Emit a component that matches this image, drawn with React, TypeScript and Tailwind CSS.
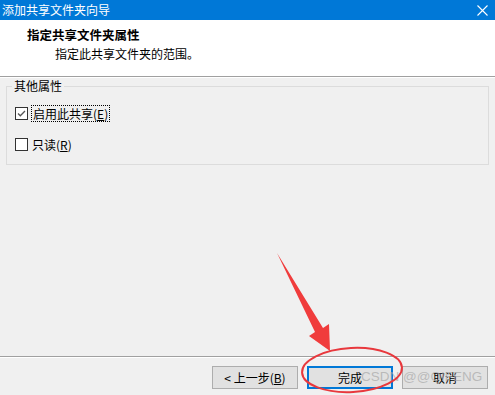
import React from "react";

const FONT = "font-['Noto_Sans_CJK_SC','Noto_Sans',sans-serif]";

function Checkbox({ checked }: { checked: boolean }) {
  return (
    <span className="w-[13px] h-[13px] border border-[#333333] bg-white flex items-center justify-center shrink-0">
      {checked && (
        <svg width="11" height="11" viewBox="0 0 11 11">
          <path d="M2 5.5 L4.3 7.8 L9 3" fill="none" stroke="#555555" strokeWidth="1.3" />
        </svg>
      )}
    </span>
  );
}

function Button({ children, primary }: { children: React.ReactNode; primary?: boolean }) {
  return (
    <button
      className={
        primary
          ? "w-[86px] h-[23px] bg-[#e1e1e1] border-2 border-[#0078d7] text-[12px] text-black leading-none"
          : "w-[86px] h-[23px] bg-[#e1e1e1] border border-[#adadad] text-[12px] text-black leading-none"
      }
    >
      {children}
    </button>
  );
}

export default function App() {
  return (
    <div className={`relative w-[495px] h-[395px] overflow-hidden flex flex-col bg-[#f0f0f0] ${FONT}`}>
      {/* title bar */}
      <div className="h-[20px] bg-[#0078d7] text-white text-[12px] flex items-center justify-between pl-[2px] pr-[7px]">
        <span className="leading-none">添加共享文件夹向导</span>
        <svg width="11" height="11" viewBox="0 0 11 11">
          <path d="M0.5 0.5 L10.5 10.5 M10.5 0.5 L0.5 10.5" stroke="#ffffff" strokeWidth="1.1" />
        </svg>
      </div>

      {/* header */}
      <div className="h-[57px] bg-white border-b border-[#a0a0a0] shadow-[0_1px_0_#ffffff] pt-[7px]">
        <div className="pl-[27px] text-[12.5px] font-bold text-black leading-[16px]">指定共享文件夹属性</div>
        <div className="pl-[55px] mt-[3px] text-[12px] text-black leading-[16px]">指定此共享文件夹的范围。</div>
      </div>

      {/* group box */}
      <fieldset className="mx-[6px] mt-[1px] border border-[#dcdcdc] pb-[11px]">
        <legend className="ml-[5px] px-[2px] text-[12px] leading-[16px] text-black">其他属性</legend>
        <div className="flex flex-col gap-[13px] pl-[8px] pt-[10px]">
          <label className="h-[18px] flex items-center gap-[3px]">
            <Checkbox checked />
            <span className="border border-dotted border-black px-[1px] text-[12px] leading-[15px] text-black">
              启用此共享(<span className="underline">E</span>)
            </span>
          </label>
          <label className="h-[18px] flex items-center gap-[4px]">
            <Checkbox checked={false} />
            <span className="text-[12px] leading-[15px] text-black">
              只读(<span className="underline">R</span>)
            </span>
          </label>
        </div>
      </fieldset>

      <div className="flex-1" />

      {/* footer */}
      <div className="h-[39px] border-t border-[#a0a0a0] shadow-[inset_0_1px_0_#ffffff] flex justify-end items-start gap-[9px] pt-[9px] pr-[7px]">
        <Button>
          &lt; 上一步(<span className="underline">B</span>)
        </Button>
        <Button primary>完成</Button>
        <Button>取消</Button>
      </div>

      {/* watermark */}
      <span className="absolute left-[361px] top-[370px] text-[13.5px] leading-none text-[#a8a8a8]/70 font-['Liberation_Sans',sans-serif] pointer-events-none">
        CSDN @@QIFENG
      </span>

      {/* annotation */}
      <svg className="absolute inset-0 pointer-events-none" width="495" height="395" viewBox="0 0 495 395">
        <polygon points="277,253 323,328 329,324 330,351 309,336 315,332" fill="#f03c3c" />
        <ellipse cx="352" cy="370" rx="50" ry="22" fill="none" stroke="#e8383d" strokeWidth="2" transform="rotate(-3 352 370)" />
      </svg>
    </div>
  );
}
